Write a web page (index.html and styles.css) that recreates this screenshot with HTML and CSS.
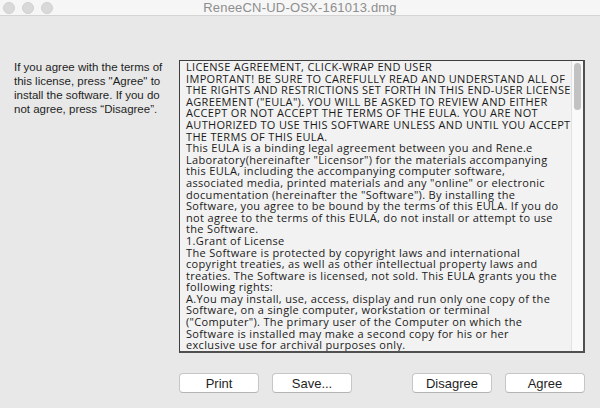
FILE: index.html
```html
<!DOCTYPE html>
<html lang="en">
<head>
  <meta charset="UTF-8" />
  <title>ReneeCN-UD-OSX-161013.dmg</title>
  <link rel="stylesheet" href="styles.css">
</head>
<body>

  <!-- barra de titulo -->
  <div class="titlebar">
    <div class="lights">
      <span></span>
      <span></span>
      <span></span>
    </div>
    <div class="title">ReneeCN-UD-OSX-161013.dmg</div>
  </div>

  <div class="content">
    <div class="main">
      <p class="hint">
        If you agree with the terms of<br />
        this license, press "Agree" to<br />
        install the software. If you do<br />
        not agree, press “Disagree”.
      </p>

      <div class="license">
        <div class="license-text">
          <div>LICENSE AGREEMENT, CLICK-WRAP END USER</div>
          <div>IMPORTANT! BE SURE TO CAREFULLY READ AND UNDERSTAND ALL OF</div>
          <div>THE RIGHTS AND RESTRICTIONS SET FORTH IN THIS END-USER LICENSE</div>
          <div>AGREEMENT ("EULA"). YOU WILL BE ASKED TO REVIEW AND EITHER</div>
          <div>ACCEPT OR NOT ACCEPT THE TERMS OF THE EULA. YOU ARE NOT</div>
          <div>AUTHORIZED TO USE THIS SOFTWARE UNLESS AND UNTIL YOU ACCEPT</div>
          <div>THE TERMS OF THIS EULA.</div>
          <div>This EULA is a binding legal agreement between you and Rene.e</div>
          <div>Laboratory(hereinafter "Licensor") for the materials accompanying</div>
          <div>this EULA, including the accompanying computer software,</div>
          <div>associated media, printed materials and any "online" or electronic</div>
          <div>documentation (hereinafter the "Software"). By installing the</div>
          <div>Software, you agree to be bound by the terms of this EULA. If you do</div>
          <div>not agree to the terms of this EULA, do not install or attempt to use</div>
          <div>the Software.</div>
          <div>1.Grant of License</div>
          <div>The Software is protected by copyright laws and international</div>
          <div>copyright treaties, as well as other intellectual property laws and</div>
          <div>treaties. The Software is licensed, not sold. This EULA grants you the</div>
          <div>following rights:</div>
          <div>A.You may install, use, access, display and run only one copy of the</div>
          <div>Software, on a single computer, workstation or terminal</div>
          <div>("Computer"). The primary user of the Computer on which the</div>
          <div>Software is installed may make a second copy for his or her</div>
          <div>exclusive use for archival purposes only.</div>
        </div>
        <div class="scrollbar">
          <div class="thumb"></div>
        </div>
      </div>
    </div>

    <div class="buttons">
      <div class="btn-group">
        <button class="btn">Print</button>
        <button class="btn">Save...</button>
      </div>
      <div class="btn-group">
        <button class="btn">Disagree</button>
        <button class="btn">Agree</button>
      </div>
    </div>
  </div>

</body>
</html>
```

FILE: styles.css
```css
body {
  margin: 0;
  font-family: 'Liberation Sans', Arial, sans-serif;
  background-color: #e8e8e8;
  color: #222;
  width: 600px;
  height: 408px;
  overflow: hidden;
}

/* Barra de titulo */
.titlebar {
  display: flex;
  align-items: center;
  height: 15px;
  background-color: #f6f6f6;
  border-bottom: 1px solid #d4d4d4;
}

.lights {
  display: flex;
  gap: 7px;
  padding-left: 3px;
  width: 57px;
  box-sizing: border-box;
}

.lights span {
  width: 12px;
  height: 12px;
  border-radius: 50%;
  background-color: #d9d9d9;
  border: 1px solid #d0d0d0;
  box-sizing: border-box;
}

.title {
  flex: 1;
  text-align: center;
  padding-right: 57px;
  font-size: 13px;
  letter-spacing: 0.2px;
  color: #8e8e8e;
  line-height: 15px;
}

.content {
  padding: 44px 15px 0 14px;
}

.main {
  display: grid;
  grid-template-columns: 165px 406px;
}

.hint {
  margin: 0;
  font-size: 11.5px;
  line-height: 14px;
  color: #1e1e1e;
}

/* Caja de licencia */
.license {
  display: flex;
  height: 293px;
  box-sizing: border-box;
  border: 1px solid #3e3e3e;
  border-right: 2px solid #505050;
  border-bottom: 2px solid #505050;
  background-color: #f2f2f2;
  overflow: hidden;
}

.license-text {
  flex: 1;
  padding-left: 6px;
  font-family: 'Open Sans', sans-serif;
  font-size: 11px;
  letter-spacing: 0.33px;
  line-height: 11.6px;
  color: #1a1a1a;
  white-space: nowrap;
}

.scrollbar {
  width: 12px;
  background-color: #f9f9f9;
  border-left: 1px solid #e2e2e2;
  padding: 2px 2px 0 2px;
  box-sizing: border-box;
}

.thumb {
  width: 7px;
  height: 47px;
  border-radius: 4px;
  background-color: #c2c2c2;
}

/* Botones */
.buttons {
  display: flex;
  justify-content: space-between;
  width: 406px;
  margin: 20px 0 0 165px;
}

.btn-group {
  display: flex;
  gap: 13px;
}

.btn {
  width: 80px;
  height: 20px;
  padding: 0;
  font-family: 'Liberation Sans', Arial, sans-serif;
  font-size: 13px;
  color: #1e1e1e;
  background-color: #fff;
  border: 1px solid #c6c6c6;
  border-bottom-color: #b4b4b4;
  border-radius: 4px;
}
```
